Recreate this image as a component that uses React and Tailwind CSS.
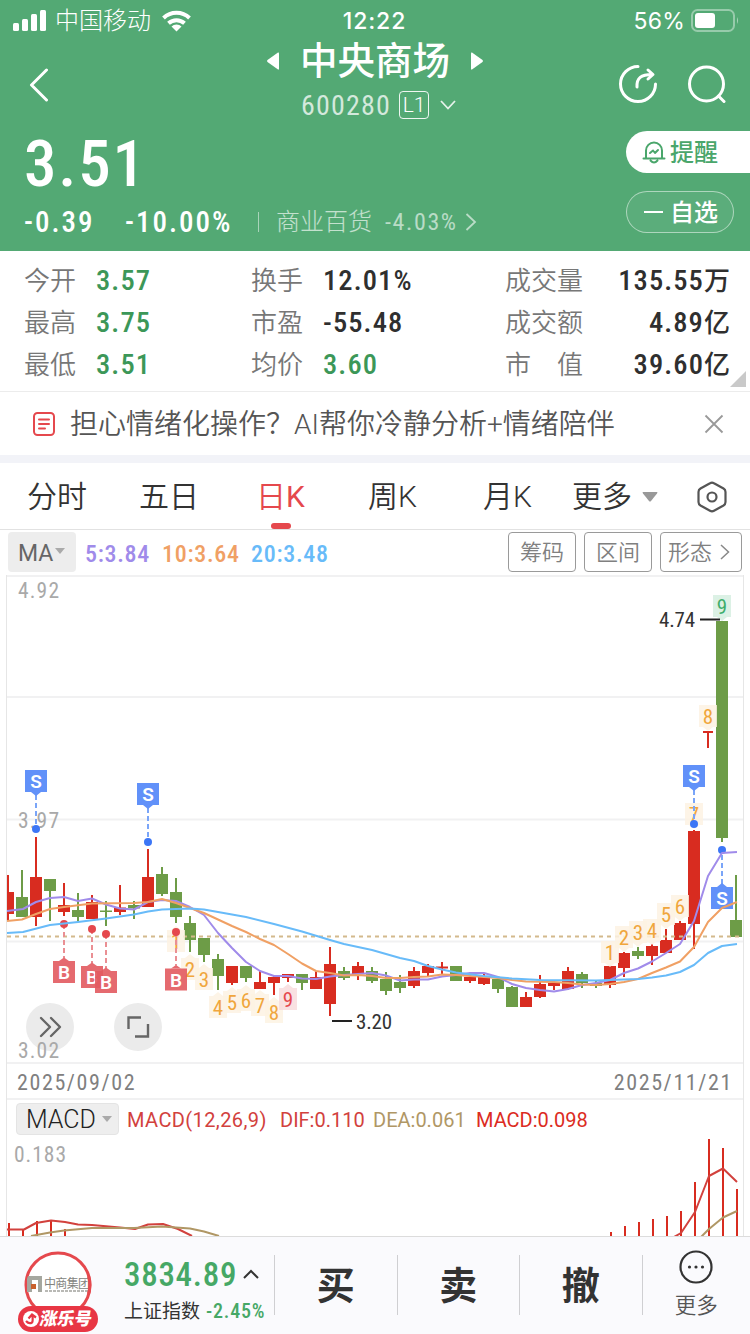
const CJK = 'font-["Roboto","Noto_Sans_CJK_SC",sans-serif]';
const SOFT = 'font-["Roboto","Noto_Sans_CJK_SC_DemiLight","Noto_Sans_CJK_SC",sans-serif] font-light';

/* [open/close top, bottom, wick high, wick low, up?] */
const CANDLES = [
  [892, 914, 875, 921, 1], [897, 917, 870, 917, 0], [877, 917, 837, 926, 1], [879, 891, 879, 921, 0],
  [905, 912, 883, 916, 1], [910, 917, 893, 921, 0], [902, 919, 895, 919, 1], [910.5, 912, 901, 926, 0],
  [907.5, 912, 885, 915, 1], [905, 908.5, 901, 919, 0], [877, 907, 849, 907, 1], [874, 894, 867, 896, 0],
  [892, 917, 878, 923, 0], [923, 940, 916, 952, 0], [938, 955, 938, 962, 0], [959, 976, 954, 990, 0],
  [966, 983, 966, 985, 1], [966, 978, 966, 982, 0], [982, 989, 971, 989, 1], [977, 983, 975, 995, 1],
  [974, 978, 974, 982, 1], [974, 983, 974, 990, 0], [977, 989, 971, 989, 1], [964, 1004, 947, 1016, 1],
  [971, 978, 967, 980, 0], [966, 974, 962, 980, 1], [971, 981, 967, 983, 0], [979, 991, 972, 995, 0],
  [982, 988, 975, 993, 0], [971, 986, 967, 988, 1], [966, 973, 964, 976, 1], [966.5, 968.5, 962, 974, 1],
  [966, 981, 966, 981, 0], [977, 981, 975, 983, 1], [977, 984, 973, 985, 1], [979, 989, 979, 993, 0],
  [987, 1007, 986, 1007, 0], [997, 1007, 992, 1007, 1], [984, 997, 975, 998, 1], [983, 986, 983, 990, 1],
  [971, 989, 967, 990, 1], [974, 983, 972, 988, 0], [983, 986, 980, 988, 0], [966, 985, 966, 988, 1],
  [953, 968, 952, 977, 1], [951, 956, 947, 959, 0], [946, 956, 944, 965, 1], [940, 953, 929, 953, 1],
  [923, 940, 921, 940, 1], [831, 924, 830, 949, 1], null, [621, 838, 621, 842, 0], [920, 937, 875, 937, 0],
];

const MA5 = '7,911 23,909 36,902 50,898 64,897 78,901 92,898.5 106,904.5 120,908.5 134,909.5 148,902 162,900 176,901 190,907 204,915 218,933 232,948 246,962 260,971 274,976 288,976 302,978.5 316,979 330,976.5 344,975 358,974 372,973 386,975.5 400,980.5 414,979.5 428,979.5 442,976.5 456,975 470,973 484,973 498,977 512,984 526,988 540,990 554,991.5 568,989 582,985 596,983 610,980 624,973 638,968.5 652,961.5 666,953 680,944 694,921 708,876 722,853 737,852';
const MA10 = '7,921 22,919.5 36,914 50,909 64,907 92,903.5 134,903 148,902 162,899 176,903 190,908 204,913 218,919.5 232,926 246,932 260,939 274,945 288,954 302,963.5 316,971 330,973 344,975.5 358,975 372,976 386,978 400,978 414,977 428,976.5 442,974.5 456,975 470,976 484,977 498,978 512,980 526,981.5 554,982 568,983 582,984.5 596,985 610,984 624,982 638,979 652,973 666,967.5 680,961.5 694,947 708,922 722,908 737,902';
const MA20 = '7,933 23,932 50,925 78,922 106,918.5 134,914.5 148,911.5 162,909.5 190,908.5 204,909.5 218,912 246,917 274,924 302,931.5 330,940 344,944 372,950 400,958 414,961 428,966 442,969.5 456,972.5 484,976 512,978.5 540,980 596,980.5 624,979.5 638,979 652,977.5 666,975.5 680,972 694,965 708,953 722,946 737,944';

/* nine-turn counters: [x, centre y, digit, pointer side, tone] */
const COUNTS = [
  [176, 941, 1, 'up', 'o'], [190, 969, 2, 'up', 'o'], [204, 979, 3, 'up', 'o'], [218, 1007, 4, 'up', 'o'],
  [232, 1002, 5, 'up', 'o'], [246, 1000, 6, 'up', 'o'], [260, 1005, 7, 'up', 'o'], [274, 1012, 8, 'up', 'o'],
  [288, 999, 9, 'up', 'r'],
  [610, 952, 1, 'down', 'o'], [624, 937, 2, 'down', 'o'], [638, 932, 3, 'down', 'o'], [652, 930, 4, 'down', 'o'],
  [666, 914, 5, 'down', 'o'], [680, 906, 6, 'down', 'o'], [694, 814, 7, 'down', 'o'], [708, 716, 8, 'down', 'o'],
  [722, 606, 9, 'down', 'g'],
];
const TONES = { o: ['#fdf3e3', '#f0a63c'], r: ['#f9dcdd', '#e5484d'], g: ['#d6efe1', '#3fae6c'] };

const BARS = [
  [9, 1223], [23, 1229], [37, 1221], [51, 1221], [65, 1229], [611, 1232], [625, 1226], [639, 1222], [653, 1219],
  [667, 1216], [681, 1211], [695, 1182], [709, 1139], [723, 1148], [737, 1189],
];

function Candle({ x, c }) {
  const [t, b, h, l, up] = c;
  return (
    <g fill={up ? '#d82c20' : '#6d9c47'}>
      <rect x={x - 1} y={h} width="2" height={l - h} />
      <rect x={x - 6} y={t} width="12" height={b - t} />
    </g>
  );
}

function Count({ x, y, n, dir, tone }) {
  const [bg, fg] = TONES[tone];
  const tip = dir === 'up' ? `M${x - 5} ${y - 11}l5 -4 5 4z` : `M${x - 5} ${y + 11}l5 4 5 -4z`;
  return (
    <g>
      <g fill={bg} opacity="0.85">
        <rect x={x - 9} y={y - 11} width="18" height="22" />
        <path d={tip} />
      </g>
      <text x={x} y={y + 7.5} fontSize="21" textAnchor="middle" fill={fg}>{n}</text>
    </g>
  );
}

function Sell({ x, y, dot, flip }) {
  return (
    <g>
      <path d={`M${x} ${flip ? y - 14 : y + 14}V${dot}`} stroke="#7aa5f8" strokeWidth="2" strokeDasharray="5 3" />
      <circle cx={x} cy={dot} r="4" fill="#3c76f6" />
      <rect x={x - 11} y={y - 11} width="22" height="22" fill="#6191f9" />
      <path d={flip ? `M${x - 5} ${y - 11}l5 -4 5 4z` : `M${x - 5} ${y + 11}l5 4 5 -4z`} fill="#6191f9" />
      <text x={x} y={y + 7} fontSize="19" fontWeight="600" textAnchor="middle" fill="#fff" className="font-[Roboto]">S</text>
    </g>
  );
}

function Buy({ x, y, dot }) {
  return (
    <g>
      <path d={`M${x} ${dot}V${y - 14}`} stroke="#ea8f93" strokeWidth="2" strokeDasharray="5 3" />
      <circle cx={x} cy={dot} r="4" fill="#e5484d" />
      <g opacity="0.9">
        <rect x={x - 11} y={y - 11} width="22" height="22" fill="#e35a60" />
        <path d={`M${x - 5} ${y - 11}l5 -3.5 5 3.5z`} fill="#e35a60" />
      </g>
      <text x={x} y={y + 7} fontSize="19" fontWeight="600" textAnchor="middle" fill="#fff" className="font-[Roboto]">B</text>
    </g>
  );
}

function PriceChart() {
  return (
    <svg className='block font-["Roboto_Condensed",sans-serif]' width="736" height="490" viewBox="7 575 736 490" fill="none">
      <path d="M7 576H743M7 697H743M7 819.5H743M7 941.5H743M7 1063H743" stroke="#f1f1f2" strokeWidth="2" />
      <g fontSize="21.5" fill="#a9a9a9">
        <text x="18" y="598" textLength="41">4.92</text>
        <text x="18" y="828" textLength="41">3.97</text>
      </g>
      {CANDLES.map((c, i) => c && <Candle key={i} x={8 + 14 * i} c={c} />)}
      <path d="M7 936.5H743" stroke="#d3b98c" strokeWidth="2" strokeDasharray="4 4" />
      {COUNTS.map(([x, y, n, dir, tone]) => <Count key={x} x={x} y={y} n={n} dir={dir} tone={tone} />)}
      <path d="M703 731H713V733H709V748H707V733H703Z" fill="#d82c20" />
      <Sell x={36} y={781} dot={829} />
      <Sell x={148} y={794} dot={842} />
      <Sell x={694} y={776} dot={824} />
      <Sell x={722} y={898} dot={850} flip />
      <Buy x={64} y={972} dot={924} />
      <Buy x={92} y={977} dot={929} />
      <Buy x={106} y={982} dot={934} />
      <Buy x={176} y={979.5} dot={932} />
      <g strokeWidth="2" strokeLinejoin="round">
        <polyline points={MA5} stroke="#a08bea" />
        <polyline points={MA10} stroke="#f0a064" />
        <polyline points={MA20} stroke="#68bbf9" />
      </g>
      <path d="M700 619.5H720M332 1021H352" stroke="#222" strokeWidth="2" />
      <g fontSize="21" fill="#333">
        <text x="659" y="627" textLength="36">4.74</text>
        <text x="356" y="1029" textLength="36">3.20</text>
      </g>
      <g stroke="#666" strokeWidth="2.4" strokeLinecap="round" strokeLinejoin="round">
        <circle cx="50" cy="1027" r="24" fill="#ebebeb" stroke="none" />
        <circle cx="138" cy="1027" r="24" fill="#ebebeb" stroke="none" />
        <path d="M41 1018L50 1027L41 1036M51 1018L60 1027L51 1036" />
        <path d="M128.500 1029V1017.500H141M148 1024V1036.500H135" strokeLinecap="butt" strokeLinejoin="miter" />
      </g>
      <text x="18" y="1058" fontSize="21.5" textLength="41" fill="#a9a9a9">3.02</text>
    </svg>
  );
}

function MacdChart() {
  return (
    <svg className='block font-["Roboto_Condensed",sans-serif]' width="736" height="99" viewBox="7 1137 736 99" fill="none">
      <text x="14" y="1162" fontSize="21.5" textLength="52" fill="#a9a9a9">0.183</text>
      <path d={BARS.map(([x, y]) => `M${x} ${y}V1236`).join('')} stroke="#d82c20" strokeWidth="2" />
      <g strokeWidth="2" strokeLinejoin="round">
        <polyline points="7,1229.5 24,1229.5 36,1223 51,1220.5 65,1222 78,1224.5 92,1225 120,1227.5 135,1229 148,1224.5 163,1224 178,1229 192,1236" stroke="#d2413d" />
        <polyline points="31,1236 50,1232.5 64,1230.5 92,1228 134,1228 162,1226.5 190,1228.5 204,1231.5 219,1236" stroke="#b09765" />
        <polyline points="674,1237 681,1233 695,1212 709,1176 723,1168.5 737,1182" stroke="#d2413d" />
        <polyline points="701,1237 709,1229 723,1217.5 737,1211" stroke="#b09765" />
      </g>
    </svg>
  );
}

function StatusBar() {
  return (
    <div className='grid h-10 grid-cols-3 items-center pl-[13px] pr-[11px] pt-px font-["Inter","Noto_Sans_CJK_SC",sans-serif]'>
      <div className="flex items-center">
        <svg width="34" height="22" viewBox="0 0 34 22" fill="#fff">
          <rect y="13" width="6" height="8" rx="1.5" /><rect x="9" y="9" width="6" height="12" rx="1.5" />
          <rect x="18" y="4" width="6" height="17" rx="1.5" /><rect x="27" width="6" height="21" rx="1.5" />
        </svg>
        <span className="ml-2 pt-px text-[24px] font-light leading-none">中国移动</span>
        <svg className="ml-2.5" width="32" height="24" viewBox="0 0 32 24" fill="none" stroke="#fff" strokeWidth="4">
          <path d="M2.5 9A19 19 0 0 1 28.500 9M7.500 14.200A12 12 0 0 1 23.500 14.200" />
          <path d="M15.500 22.500L10.500 17.500A7 7 0 0 1 20.500 17.500Z" fill="#fff" stroke="none" />
        </svg>
      </div>
      <span className="pr-[3px] pt-px text-center text-[23px] font-medium leading-none tracking-[0.9px]">12:22</span>
      <div className="flex items-center justify-end">
        <span className="pt-px text-[23px] leading-none tracking-[0.2px]">56%</span>
        <svg className="ml-1.5" width="48" height="24" viewBox="0 0 48 24" fill="none">
          <rect x="1" y="1" width="42" height="21" rx="5.500" stroke="#fff" strokeOpacity="0.4" strokeWidth="2" />
          <rect x="4" y="4" width="20" height="15" rx="3" fill="#fff" />
          <path d="M46 8Q48 11.500 46 15Z" fill="#fff" fillOpacity="0.5" />
        </svg>
      </div>
    </div>
  );
}

function NavBar() {
  return (
    <div className="flex h-[84px] items-center">
      <div className="w-[267px] pl-7 pt-1.5">
        <svg width="22" height="34" viewBox="0 0 22 34" fill="none" stroke="#fff" strokeWidth="3" strokeLinecap="round" strokeLinejoin="round">
          <path d="M18.500 2L3.500 17L18.500 32" />
        </svg>
      </div>
      <div className="flex w-[216px] flex-col items-center">
        <div className="flex h-[42px] w-full items-center justify-between">
          <svg width="12" height="18" viewBox="0 0 12 18" fill="#fff"><path d="M11 0.500Q12 0 12 1.500V16.500Q12 18 11 17.500L0.500 10Q-0.300 9 0.500 8Z" /></svg>
          <h1 className="pt-0.5 text-[37.500px] font-medium leading-none">中央商场</h1>
          <svg width="12" height="18" viewBox="0 0 12 18" fill="#fff"><path d="M1 0.500Q0 0 0 1.500V16.500Q0 18 1 17.500L11.500 10Q12.300 9 11.500 8Z" /></svg>
        </div>
        <div className="flex h-[42px] w-full items-center pl-[34px] pt-1">
          <span className='w-[98px] pt-0.5 font-["Roboto_Condensed"] text-[28px] leading-none tracking-[1.2px] text-white/75'>600280</span>
          <span className="flex h-7 w-[30px] items-center justify-center rounded border border-white/90 text-[21px] font-light leading-none">L1</span>
          <svg className="ml-[11px]" width="16" height="10" viewBox="0 0 16 10" fill="none" stroke="#fff" strokeOpacity="0.85" strokeWidth="1.800"><path d="M1 1L8 8.500L15 1" /></svg>
        </div>
      </div>
      <div className="flex flex-1 items-center justify-end gap-[28px] pr-6 pt-1">
        <svg width="40" height="40" viewBox="0 0 40 40" fill="none" stroke="#fff" strokeWidth="3" strokeLinecap="round" strokeLinejoin="round">
          <path d="M20 2.500A17.500 17.500 0 1 0 37.500 20" />
          <path d="M19 23C18.500 14 23 10.500 34 10.500M30 6L35 10.500L30 15" />
        </svg>
        <svg width="40" height="40" viewBox="0 0 40 40" fill="none" stroke="#fff" strokeWidth="3" strokeLinecap="round">
          <circle cx="20.500" cy="20" r="17" /><path d="M32.500 32L38 37.500" />
        </svg>
      </div>
    </div>
  );
}

function Quote() {
  return (
    <div className="flex h-[127px] justify-between">
      <div className='flex flex-col font-["Roboto_Condensed","Noto_Sans_CJK_SC",sans-serif] pl-6'>
        <div className="flex h-[78px] items-center pt-[2px] text-[65px] font-medium leading-none tracking-[1.8px]">3.51</div>
        <div className="flex h-[38px] items-center whitespace-nowrap pt-0.5 leading-none">
          <span className="w-[101px] text-[29px] font-medium tracking-[2px]">-0.39</span>
          <span className="w-[133px] text-[29px] font-medium tracking-[2px]">-10.00%</span>
          <span className="h-5 w-px bg-white/50" />
          <span className="ml-[17px] text-[24px] font-light text-white/65">商业百货</span>
          <span className="ml-[13px] text-[24px] tracking-[1.600px] text-white/60">-4.03%</span>
          <svg className="ml-[7px]" width="12" height="18" viewBox="0 0 12 18" fill="none" stroke="#fff" strokeOpacity="0.6" strokeWidth="1.800"><path d="M1.500 1L10 9L1.500 17" /></svg>
        </div>
      </div>
      <div className="flex flex-col gap-[18px] pt-[7px]">
        <div className="flex h-[42px] w-[124px] items-center rounded-l-full bg-white pl-4 text-[#4aa66b]">
          <svg width="24" height="24" viewBox="0 0 24 24" fill="none" stroke="currentColor" strokeWidth="2" strokeLinecap="round" strokeLinejoin="round">
            <path d="M4 18V10.500A8 8 0 0 1 20 10.500V18M1.500 18.500H22.500M8.500 20.500Q12 24.500 15.500 20.500M8 13L11 10.500L13 13L16 10" />
          </svg>
          <span className="ml-1 pt-0.5 text-[24px] font-medium leading-none">提醒</span>
        </div>
        <div className="flex h-[42px] w-[108px] items-center rounded-full border border-white/50 bg-white/5 pl-[17px]">
          <span className="h-[2px] w-[19px] bg-white" />
          <span className="ml-[7px] pt-0.5 text-[24px] font-medium leading-none">自选</span>
        </div>
      </div>
    </div>
  );
}

const STATS = [
  ['今开', '3.57', '换手', '12.01%', '成交量', '135.55', '万'],
  ['最高', '3.75', '市盈', '-55.48', '成交额', '4.89', '亿'],
  ['最低', '3.51', '均价', '3.60', '市　值', '39.60', '亿'],
];

function Stats() {
  const num = 'font-["Roboto_Condensed","Noto_Sans_CJK_SC"] text-[28.500px] font-medium tracking-[1.1px]';
  const label = `${SOFT} text-[#777]`;
  return (
    <section className="relative h-[141px] border-b border-[#ececec] pt-[9px]">
      {STATS.map((s, i) => (
        <div key={s[0]} className="flex h-[42px] items-center pl-6 pr-5 text-[26px] leading-none">
          <span className={`${label} w-[72px]`}>{s[0]}</span>
          <span className={`${num} w-[155px] text-[#3c9758]`}>{s[1]}</span>
          <span className={`${label} w-[72px]`}>{s[2]}</span>
          <span className={`${num} w-[182px] ${i === 2 ? 'text-[#3c9758]' : 'text-[#2f2f2f]'}`}>{s[3]}</span>
          <span className={label}>{s[4]}</span>
          <span className={`${num} ml-auto text-[#2f2f2f]`}>{s[5]}</span>
          <span className="font-medium text-[#2f2f2f]">{s[6]}</span>
        </div>
      ))}
      <svg className="absolute bottom-1 right-1" width="16" height="16" viewBox="0 0 16 16" fill="#c9c9c9"><path d="M16 0V16H0Z" /></svg>
    </section>
  );
}

function Tip() {
  return (
    <section className="flex h-[63px] items-center pl-8 pr-[26px]">
      <svg width="24" height="26" viewBox="0 0 24 26" fill="none" stroke="#e5484d" strokeWidth="2" strokeLinecap="round">
        <rect x="2" y="2" width="20" height="22" rx="3.500" /><path d="M7 8.500H17M7 13H17M7 17.500H13" />
      </svg>
      <span className={`${SOFT} ml-[14px] whitespace-nowrap pt-[3px] text-[28px] leading-none text-[#555]`}>担心情绪化操作？AI帮你冷静分析+情绪陪伴</span>
      <svg className="ml-auto" width="20" height="20" viewBox="0 0 20 20" stroke="#999" strokeWidth="1.800"><path d="M1.500 1.500L18.500 18.500M18.500 1.500L1.500 18.500" /></svg>
    </section>
  );
}

function Tabs() {
  return (
    <nav className={`${SOFT} flex h-[67px] items-center border-b border-[#e2e2e2] pl-[27px] pt-0.5 text-[30px] leading-none text-[#333]`}>
      <span className="w-[112px]">分时</span>
      <span className="w-[117px]">五日</span>
      <span className="relative w-[112px] font-normal text-[#e5484d]">
        日K
        <span className="absolute -bottom-[17px] left-[15px] h-1.5 w-5 rounded-full bg-[#e5484d]" />
      </span>
      <span className="w-[115px]">周K</span>
      <span className="w-[89px]">月K</span>
      <span>更多</span>
      <svg className="ml-2.5" width="16" height="10" viewBox="0 0 16 10" fill="#999"><path d="M1 0H15Q16 0 15 1.500L9 9Q8 10 7 9L1 1.500Q0 0 1 0Z" /></svg>
      <svg className="ml-[39px]" width="30" height="32" viewBox="0 0 30 32" fill="none" stroke="#555" strokeWidth="2.200" strokeLinejoin="round">
        <path d="M13 2.200Q15 1 17 2.200L26.500 7.500Q28.500 8.700 28.500 11V21Q28.500 23.300 26.500 24.500L17 29.800Q15 31 13 29.800L3.500 24.500Q1.500 23.300 1.500 21V11Q1.500 8.700 3.500 7.500Z" />
        <circle cx="15" cy="16" r="4.500" />
      </svg>
    </nav>
  );
}

function Indicators() {
  const btn = `${SOFT} flex h-10 items-center rounded border border-[#9a9a9a] pt-0.5 text-[22px] text-[#808080]`;
  return (
    <div className="flex h-[45px] items-start pl-2 pr-2 pt-0.5 leading-none">
      <div className="flex h-10 w-[68px] items-center rounded bg-[#ededed] pl-2.5 pt-0.5 text-[23px] text-[#666]">
        MA
        <svg className="-mt-1 ml-0.5" width="10" height="6" viewBox="0 0 10 6" fill="#aaa"><path d="M0 0H10L5 6Z" /></svg>
      </div>
      <div className='flex h-[43px] items-center font-["Roboto_Condensed"] text-[24px] font-medium tracking-[0.7px]'>
        <span className="ml-[9px] w-[77px] text-[#a08bea]">5:3.84</span>
        <span className="w-[89px] text-[#f0a064]">10:3.64</span>
        <span className="text-[#68bbf9]">20:3.48</span>
      </div>
      <div className="ml-auto flex gap-2">
        <span className={`${btn} w-[68px] pl-[11px]`}>筹码</span>
        <span className={`${btn} w-[68px] pl-[11px]`}>区间</span>
        <span className={`${btn} w-[82px] pl-[7px]`}>
          形态
          <svg className="-mt-0.5 ml-2" width="10" height="18" viewBox="0 0 10 18" fill="none" stroke="#888" strokeWidth="1.500"><path d="M1 2L8.500 9L1 16" /></svg>
        </span>
      </div>
    </div>
  );
}

function BottomBar() {
  return (
    <footer className="flex h-[98px] border-t border-[#dcdcdc] bg-[#fafafd] leading-none text-[#333]">
      <div className="w-[124px] pl-[18px] pt-[14px]">
        <svg width="82" height="83" viewBox="0 0 82 83" fill="none">
          <circle cx="40" cy="34" r="32" fill="#fff" stroke="#e5484d" strokeWidth="3" />
          <path d="M10 25H24V41H20V29H14V41H9V28Z" fill="#a5a79f" />
          <path d="M13 33H18V38H13Z" fill="#c9602c" />
          <text x="26" y="37" fontSize="12" textLength="46" fill="#84847e" className='font-["Noto_Sans_CJK_SC"]'>中商集团</text>
          <path d="M27 40H71" stroke="#a3a39d" strokeWidth="1.500" strokeDasharray="3 1" />
          <path d="M70.500 25A32 32 0 0 1 70.500 43" stroke="#e5484d" strokeWidth="3" />
          <rect y="55" width="80" height="26" rx="13" fill="#e83644" />
          <circle cx="13" cy="68" r="8" fill="#fff" />
          <path d="M8 70Q11 73.500 14 71.500Q15 70.500 14.500 65M10.500 67.500L14 63.500L18 66.500" stroke="#e83644" strokeWidth="2.200" />
          <text x="21" y="74" fontSize="17.500" fontWeight="900" textLength="52" fill="#fff" transform="translate(13 0) skewX(-10)" className='font-["Noto_Sans_CJK_SC"]'>涨乐号</text>
        </svg>
      </div>
      <div className="flex w-[150px] flex-col">
        <div className="mt-[18px] flex h-[38px] items-center">
          <span className='w-[111px] font-["Roboto_Condensed"] text-[33px] font-medium tracking-[0.7px] text-[#46a866]'>3834.89</span>
          <svg className="ml-2" width="16" height="10" viewBox="0 0 16 10" fill="none" stroke="#333" strokeWidth="2"><path d="M1 9L8 2L15 9" /></svg>
        </div>
        <div className="mt-1 flex h-7 items-center whitespace-nowrap">
          <span className="text-[19px]">上证指数</span>
          <span className='ml-1.5 font-["Roboto_Condensed"] text-[20px] font-medium tracking-[0.8px] text-[#46a866]'>-2.45%</span>
        </div>
      </div>
      {['买', '卖', '撤'].map((t) => (
        <div key={t} className="flex w-[122.500px] items-center">
          <span className="-mt-0.5 h-[60px] w-px bg-[#cfcfd2]" />
          <span className="flex-1 pt-px text-center text-[38px] font-bold">{t}</span>
        </div>
      ))}
      <div className="flex flex-1 items-start pt-[18px]">
        <span className="h-[60px] w-px bg-[#cfcfd2]" />
        <div className="-mt-[5px] flex flex-1 flex-col items-center">
          <svg width="34" height="34" viewBox="0 0 34 34" fill="#333">
            <circle cx="17" cy="17" r="15.500" fill="none" stroke="#333" strokeWidth="2.200" />
            <circle cx="10.500" cy="17" r="1.600" /><circle cx="17" cy="17" r="1.600" /><circle cx="23.500" cy="17" r="1.600" />
          </svg>
          <span className={`${SOFT} mt-[11px] text-[21.500px] text-[#555]`}>更多</span>
        </div>
      </div>
    </footer>
  );
}

export default function App() {
  return (
    <div className={`flex h-[1334px] w-[750px] flex-col overflow-hidden bg-white ${CJK}`}>
      <header className="h-[251px] bg-[#53a974] text-white">
        <StatusBar />
        <NavBar />
        <Quote />
      </header>
      <Stats />
      <Tip />
      <div className="h-2 bg-[#f2f3f8]" />
      <Tabs />
      <Indicators />
      <main className="mx-[6px] border-x border-[#e6e6e6]">
        <PriceChart />
        <div className='flex h-[33px] items-center justify-between px-2.5 pt-0.5 font-["Roboto_Condensed"] text-[22px] leading-none tracking-[1.600px] text-[#808080]'>
          <span>2025/09/02</span>
          <span>2025/11/21</span>
        </div>
        <div className="flex h-[39px] items-start whitespace-nowrap border-t-2 border-[#f1f1f2] pl-[9px] pt-[3px] text-[20px] leading-none">
          <div className="flex h-8 w-[103px] items-center rounded border border-[#e4e4e4] bg-[#eeeeee] pl-[9px] text-[25px] font-light text-[#222]">
            <span className="w-[72px]">MACD</span>
            <svg className="ml-1" width="10" height="6" viewBox="0 0 10 6" fill="#aaa"><path d="M0 0H10L5 6Z" /></svg>
          </div>
          <div className="flex h-[34px] items-center">
            <span className="ml-2 w-[153px] tracking-[0.4px] text-[#d2413d]">MACD(12,26,9)</span>
            <span className="w-[93px] text-[#d2413d]">DIF:0.110</span>
            <span className="w-[103px] text-[#b09765]">DEA:0.061</span>
            <span className="text-[#dc2b22]">MACD:0.098</span>
          </div>
        </div>
        <MacdChart />
      </main>
      <BottomBar />
    </div>
  );
}
